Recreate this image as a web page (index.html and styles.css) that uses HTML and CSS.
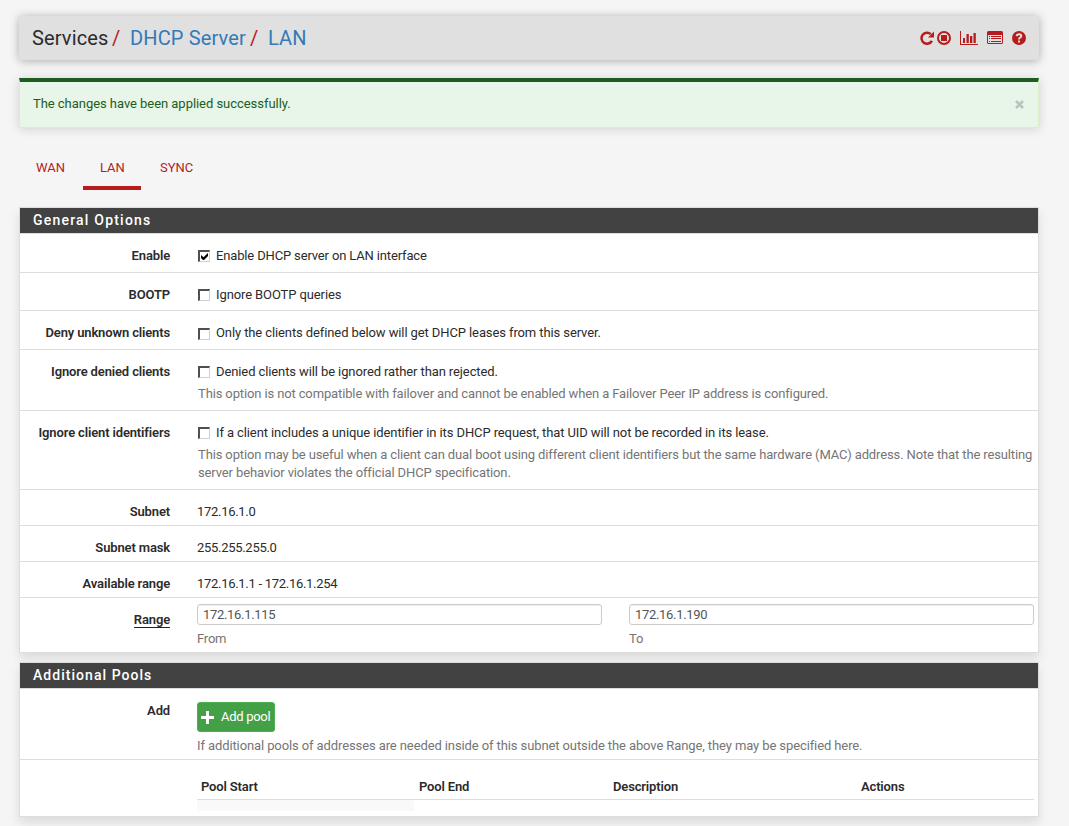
FILE: index.html
```html
<!DOCTYPE html>
<html lang="en">
<head>
<meta charset="utf-8">
<title>Services: DHCP Server: LAN</title>
<link rel="stylesheet" href="styles.css">
</head>
<body>
<header class="page-header">
  <div class="breadcrumb"><span class="crumb-root">Services</span><span class="slash">/</span><a class="crumb-server">DHCP Server</a><span class="slash slash-second">/</span><a class="crumb-lan">LAN</a></div>
  <div class="actions">
    <svg class="icon-redo" width="15" height="14" viewBox="0 0 15 14"><path d="M11.900 9.800A5.500 5.500 0 1 1 10.800 3.200" fill="none" stroke="currentColor" stroke-width="2.500"/><path d="M14 .5v6H8z" fill="currentColor"/></svg>
    <svg class="icon-stop" width="14" height="14" viewBox="0 0 14 14"><circle cx="7" cy="7" r="6" fill="none" stroke="currentColor" stroke-width="2"/><path d="M4 4h6v6H4z" fill="currentColor"/></svg>
    <svg class="icon-chart" width="18" height="14" viewBox="0 0 18 14"><path d="M0 0h1v13h17v1H0zM3 7h2v5H3zM6.500 3h2.300v9H6.500zM10 5h2.300v7H10zM13.500 2h2.300v10h-2.300z" fill="currentColor"/></svg>
    <svg class="icon-list" width="16" height="13" viewBox="0 0 16 13"><path fill-rule="evenodd" d="M1.500 0h13Q16 0 16 1.500v10q0 1.500-1.500 1.500h-13Q0 13 0 11.500v-10Q0 0 1.500 0zM1 4v7.500q0 .5.500.5h13q.5 0 .5-.5V4z" fill="currentColor"/><path d="M2 5h1v1H2zm2 0h10v1H4zM2 7h1v1H2zm2 0h10v1H4zM2 10h1v1H2zm2 0h10v1H4z" fill="currentColor"/></svg>
    <svg class="icon-help" width="14" height="14" viewBox="0 0 14 14"><circle cx="7" cy="7" r="7" fill="currentColor"/><path d="M4.600 5.100Q5 3.200 7 3.200q2.300 0 2.300 1.800 0 1.100-1.200 1.700Q7 7.200 7 8.500" fill="none" stroke="#e0e0e0" stroke-width="1.900"/><path d="M6 9.500h2v2H6z" fill="#e0e0e0"/></svg>
  </div>
</header>

<div class="alert"><span>The changes have been applied successfully.</span><svg class="close" width="9" height="9" viewBox="0 0 9 9"><path d="M1 1l7 7M8 1L1 8" stroke="#b9c4ba" stroke-width="2.500"/></svg></div>

<nav class="tabs"><a class="tab tab-wan">WAN</a><a class="tab tab-lan active">LAN</a><a class="tab tab-sync">SYNC</a></nav>

<section class="panel">
  <h2 class="panel-title">General Options</h2>
  <div class="row h39"><div class="label">Enable</div><div class="field"><label class="check snug"><span class="box"><svg width="7" height="7" viewBox="0 0 7 7"><path d="M0 2v3l2 2h1l4-4V0L2.500 4.300z"/></svg></span>Enable DHCP server on LAN interface</label></div></div>
  <div class="row h38"><div class="label">BOOTP</div><div class="field"><label class="check"><span class="box"></span>Ignore BOOTP queries</label></div></div>
  <div class="row h39"><div class="label">Deny unknown clients</div><div class="field"><label class="check"><span class="box box-low"></span>Only the clients defined below will get DHCP leases from this server.</label></div></div>
  <div class="row h61"><div class="label">Ignore denied clients</div><div class="field"><label class="check"><span class="box"></span>Denied clients will be ignored rather than rejected.</label><p class="help">This option is not compatible with failover and cannot be enabled when a Failover Peer IP address is configured.</p></div></div>
  <div class="row h79"><div class="label">Ignore client identifiers</div><div class="field"><label class="check"><span class="box"></span>If a client includes a unique identifier in its DHCP request, that UID will not be recorded in its lease.</label><p class="help">This option may be useful when a client can dual boot using different client identifiers but the same hardware (MAC) address. Note that the resulting<br>server behavior violates the official DHCP specification.</p></div></div>
  <div class="row h36"><div class="label">Subnet</div><div class="field numeric">172.16.1.0</div></div>
  <div class="row h36"><div class="label">Subnet mask</div><div class="field numeric">255.255.255.0</div></div>
  <div class="row h36"><div class="label">Available range</div><div class="field numeric">172.16.1.1 - 172.16.1.254</div></div>
  <div class="row h54"><div class="label"><span class="required">Range</span></div><div class="field range">
    <div><input class="input" value="172.16.1.115"><p class="caption">From</p></div>
    <div><input class="input" value="172.16.1.190"><p class="caption">To</p></div>
  </div></div>
</section>

<section class="panel">
  <h2 class="panel-title title-pools">Additional Pools</h2>
  <div class="row h71"><div class="label">Add</div><div class="field"><button class="button"><svg width="13" height="13" viewBox="0 0 13 13"><path d="M5 0h3v5h5v3H8v5H5V8H0V5h5z" fill="#fff"/></svg>Add pool</button><p class="help pool-help">If additional pools of addresses are needed inside of this subnet outside the above Range, they may be specified here.</p></div></div>
  <div class="row h56"><div class="label"></div><div class="field">
    <div class="pool-head"><span>Pool Start</span><span>Pool End</span><span>Description</span><span>Actions</span></div>
    <div class="pool-empty"></div>
  </div></div>
</section>
</body>
</html>
```
FILE: styles.css
```css
* { box-sizing: border-box; }
html { background: #f5f5f5; }
body {
  margin: 0;
  padding: 16px 30px 0 19px;
  height: 826px;
  overflow: hidden;
  font: 13px/18px Roboto, "Liberation Sans", sans-serif;
  color: #2b2b2b;
}
p, h2 { margin: 0; }
svg { display: block; flex: none; }

.page-header {
  display: flex;
  justify-content: space-between;
  height: 44px;
  padding: 0 13px;
  background: #e0e0e0;
  border-radius: 3px;
  box-shadow: 0 1px 10px rgba(0, 0, 0, .3);
}
.breadcrumb { display: flex; font-size: 20px; line-height: 44px; letter-spacing: .13px; white-space: nowrap; }
.crumb-root { width: 80px; }
.breadcrumb a { color: #337ab7; }
.slash { width: 18px; color: #b71c1c; }
.crumb-server { width: 120px; }
.actions { display: flex; padding-top: 15px; color: #b71c1c; }
.icon-stop { margin-left: 2px; }
.icon-chart { margin-left: 9px; }
.icon-list { margin-left: 9px; }
.icon-help { margin-left: 9px; }

.alert {
  display: flex;
  justify-content: space-between;
  height: 50px;
  margin-top: 18px;
  padding: 13px 13px 0;
  letter-spacing: -.045px;
  color: #1b5e20;
  background: #e8f5e9;
  border: 1px solid #dcedc8;
  border-top: 4px solid #1b5e20;
  box-shadow: 0 1px 10px rgba(0, 0, 0, .15);
}
.close { margin: 5px 1px 0 0; }

.tabs { display: flex; height: 50px; margin: 12px 0 17px; color: #b71c1c; }
.tab { padding: 19px 17px 0; }
.tab-wan { width: 64px; }
.tab-lan { width: 58px; }
.tab-sync { padding-left: 19px; }
.active { border-bottom: 4px solid #b71c1c; }

.panel {
  margin-bottom: 9px;
  background: #fff;
  border: 1px solid #ddd;
  box-shadow: 0 6px 10px rgba(0, 0, 0, .1);
}
.panel-title {
  height: 26px;
  padding-left: 13px;
  font-size: 14px;
  font-weight: 500;
  line-height: 25px;
  letter-spacing: 1.21px;
  color: #fff;
  background: #424242;
  border-bottom: 1px solid #ddd;
}
.title-pools { letter-spacing: 1.04px; }
.row { display: flex; border-bottom: 1px solid #ddd; }
.row:last-child { border-bottom: 0; }
.h36 { height: 36px; }
.h38 { height: 38px; }
.h39 { height: 39px; }
.h54 { height: 54px; }
.h56 { height: 56px; }
.h61 { height: 61px; }
.h71 { height: 71px; }
.h79 { height: 79px; }
.label { width: 150px; padding-top: 13px; font-weight: 600; letter-spacing: -.14px; text-align: right; white-space: nowrap; }
.required { display: inline-block; height: 17px; border-bottom: 1px solid #212121; }
.field { flex: 1; min-width: 0; margin-left: 27px; padding: 13px 4px 0 0; white-space: nowrap; }
.numeric { letter-spacing: -.29px; }

.check { display: flex; height: 18px; letter-spacing: -.104px; }
.snug { letter-spacing: -.15px; }
.box {
  width: 12px;
  height: 12px;
  margin: 3px 6px 0 1px;
  padding: 2px;
  background: #fff;
  border: 1px solid #d4d0c8;
  border-top: 2px solid #505050;
  border-left: 2px solid #505050;
}
.box-low { margin-top: 4px; }
.box:has(svg) { padding: 1px; }
.help { margin: 4px 0 0 1px; letter-spacing: -.128px; color: #757575; }
.pool-help { margin: 5px 0 0; letter-spacing: -.105px; }

.range { display: grid; grid-template-columns: 1fr 1fr; gap: 27px; padding-top: 6px; }
.input {
  display: block;
  width: 100%;
  height: 21px;
  padding: 0 5px;
  font: inherit;
  letter-spacing: -.32px;
  color: #555;
  background: #fff;
  border: 1px solid #ccc;
  border-radius: 3px;
  box-shadow: inset 0 1px 1px rgba(0, 0, 0, .075);
}
.caption { margin-top: 5px; letter-spacing: -.2px; color: #757575; }

.button {
  display: flex;
  align-items: center;
  gap: 7px;
  width: 78px;
  height: 30px;
  padding: 0 3px;
  font: inherit;
  letter-spacing: -.3px;
  white-space: nowrap;
  color: #fff;
  background: #43a047;
  border: 1px solid #4caf50;
  border-radius: 3px;
}
.pool-head {
  display: grid;
  grid-template-columns: 218px 194px 248px 1fr;
  height: 27px;
  padding: 5px 0 0 4px;
  font-weight: 600;
  letter-spacing: -.15px;
  border-bottom: 1px solid #ddd;
}
.pool-empty { width: 217px; height: 11px; background: #f9f9f9; }
```
